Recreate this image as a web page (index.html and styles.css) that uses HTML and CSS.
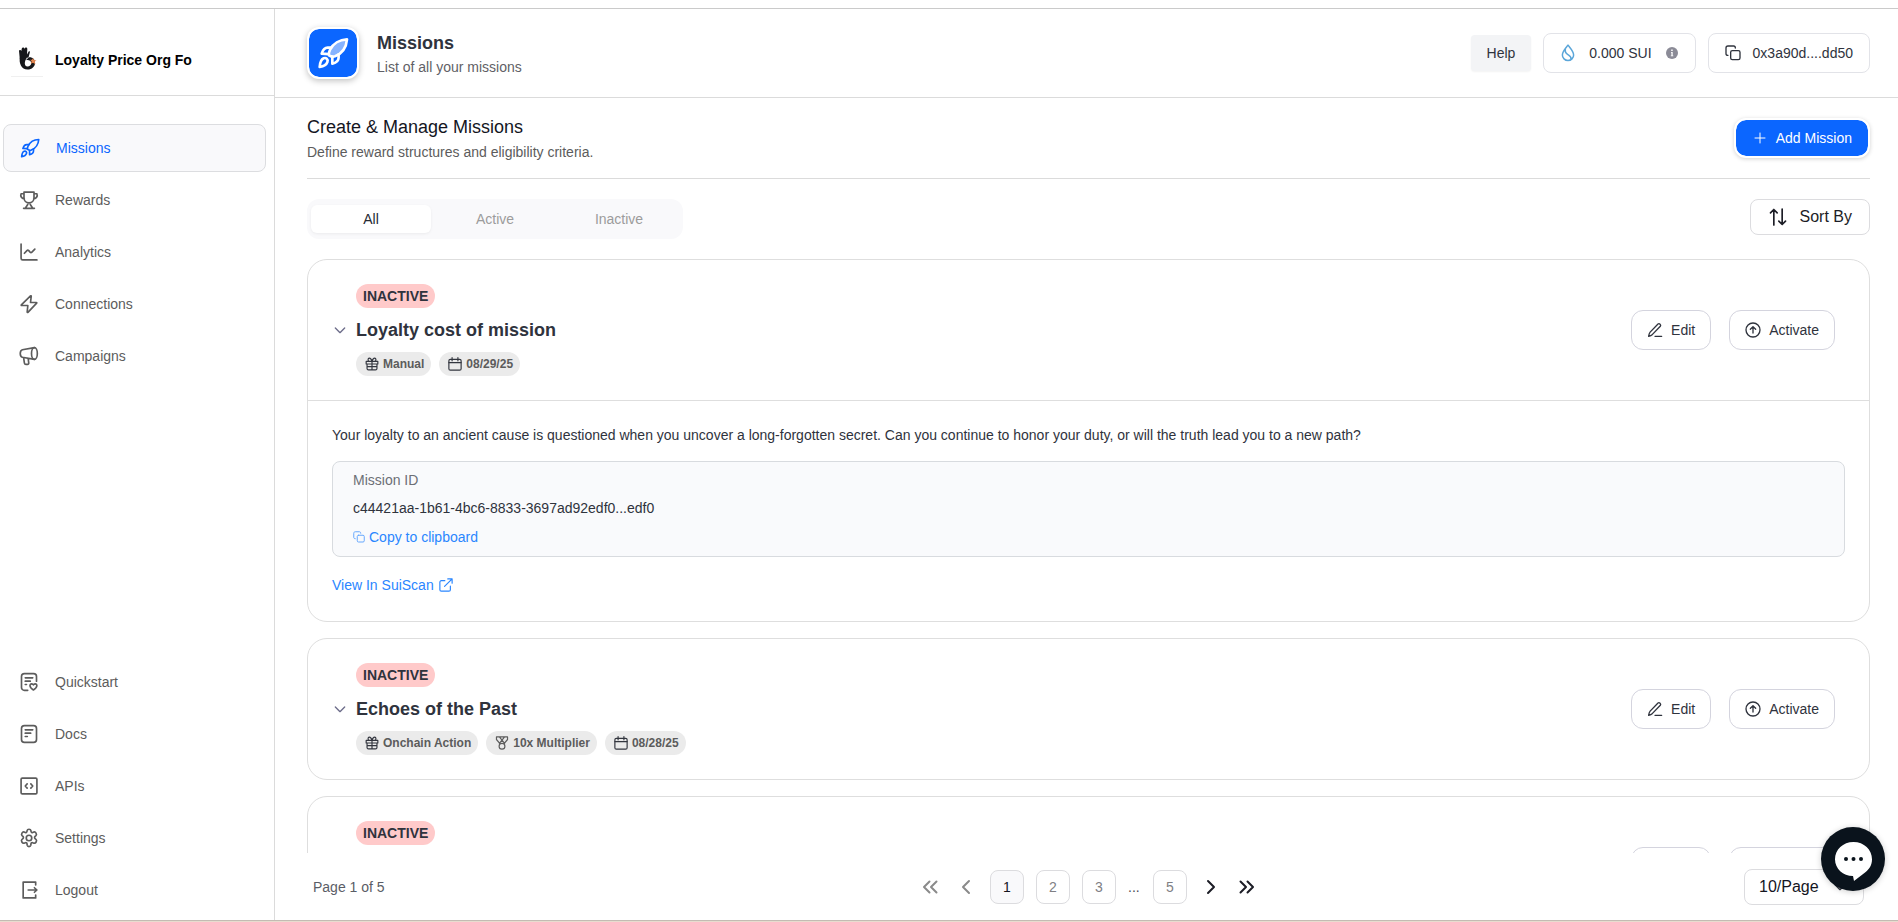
FILE: index.html
```html
<!DOCTYPE html>
<html lang="en">
<head>
<meta charset="utf-8">
<meta name="viewport" content="width=device-width, initial-scale=1">
<title>Missions</title>
<link rel="stylesheet" href="styles.css">
</head>
<body>
<svg class="sprite" aria-hidden="true">
  <symbol id="rocket" viewBox="0 0 24 24"><path class="hull" d="M22.500 1.800C17 2 12 5 9.800 9.500c-.8 1.500-1 2.700-.8 4.200 1.600 1 3 1.200 4.500.8 5-2 8.500-6.500 9-12.700z"/><path d="M10.500 8H8c-2 0-3.500 1.500-4.500 4.500l5.300.3M11.500 15v5c3-.8 4.700-2 4.700-4.500V13M2 22.500c.2-3 .8-5.500 3-6.500 1.800-.8 3.500.8 2.800 2.700C7 21 4.800 22 2 22.500z"/></symbol>
  <symbol id="trophy" viewBox="0 0 24 24"><path d="M6 2.500h12v6.800c0 3.400-2.600 6.200-6 6.200s-6-2.800-6-6.200zM6 4.500H2.500c-1 2.600.3 5.600 3.900 6.300M18 4.500h3.500c1 2.600-.3 5.600-3.900 6.300M10.500 15.500v2L7.500 22M13.500 15.500v2l3 4.500M5.500 22h13"/></symbol>
  <symbol id="chart" viewBox="0 0 24 24"><path d="M2.500 2.500v17c0 1.100.7 2 1.800 2h17.200M6.500 13.500l3-3.200c.7-.7 1.500-.7 2.200 0l1.600 1.800c.7.7 1.500.7 2.200 0L19 8.500"/></symbol>
  <symbol id="bolt" viewBox="0 0 24 24"><path d="M13.800 2.300 2.800 13c-.3.400-.1.800.4.800h7.400L9.800 21.700c0 .6.500.7.900.3l10.500-11c.4-.4.100-.8-.4-.8h-7l.9-7.500c0-.6-.5-.8-.9-.4z"/></symbol>
  <symbol id="horn" viewBox="0 0 24 24"><ellipse cx="18.500" cy="9" rx="3.500" ry="7"/><path d="M18.500 2 4 4.500C2.600 5 1.500 6.800 1.500 9s1.100 4 2.500 4.500L18.500 16M5.500 14l1 6.500c.2 1 .9 1.500 1.800 1.500h2c.9 0 1.500-.6 1.400-1.500L11 15"/></symbol>
  <symbol id="quick" viewBox="0 0 24 24"><path d="M10.500 22H6.500a3.500 3.500 0 0 1-3.500-3.500v-13A3.500 3.500 0 0 1 6.500 2h11A3.500 3.500 0 0 1 21 5.500V11M7.500 7h9M7.500 11h6M7.500 15h1.500M17.300 21.500c-5.800-3.200-4.500-7.500-2-7.300 1 .1 1.600.6 2 1.200.4-.6 1-1.100 2-1.200 2.500-.2 3.800 4.100-2 7.300z"/></symbol>
  <symbol id="doc" viewBox="0 0 24 24"><rect x="3" y="2" width="18" height="20" rx="3.500"/><path d="M7.500 7h9M7.500 11h6.500M7.500 15H10"/></symbol>
  <symbol id="api" viewBox="0 0 24 24"><rect x="2.500" y="2.500" width="19" height="19" rx="1.500"/><path d="m9.800 9.500-2.300 2.500 2.300 2.500M14.200 9.500l2.300 2.500-2.300 2.500"/></symbol>
  <symbol id="gear" viewBox="0 0 24 24"><circle cx="12" cy="12" r="3.300"/><path d="M9.700 3.200c.4-2.300 4.200-2.300 4.600 0l.2 1.100c.2.900 1.200 1.400 2 1.100l1.300-.5c2-.8 4.200 2.600 2.500 4.200l-1 .9c-.8.700-.8 2 0 2.700l1.200 1.100c1.500 1.500-.5 5-2.600 4.400l-1.500-.5c-.9-.3-1.800.2-2 1.100l-.2 1.800c-.4 2.300-4 2.300-4.400 0l-.2-1.800c-.2-.9-1.100-1.400-2-1.100l-1.500.5c-2.100.6-4.100-2.900-2.600-4.400l1.200-1.100c.8-.7.800-2 0-2.700l-1-.9C2 7.500 4.200 4.100 6.200 4.900l1.300.5c.8.300 1.800-.2 2-1.100z"/></symbol>
  <symbol id="exit" viewBox="0 0 24 24"><path d="M20 6V2.500H5v19h15V18M11 12h10.500M18.500 9.300l3 2.700-3 2.700"/></symbol>
  <symbol id="copy" viewBox="0 0 24 24"><rect x="8.500" y="8.500" width="14" height="13.500" rx="2.500"/><path d="M4.500 15.500c-1.700 0-3-1-3-2.500V4.500c0-1.700 1.300-3 3-3H13c1.500 0 2.500 1.300 2.500 3"/></symbol>
  <symbol id="drop" viewBox="0 0 24 24"><path d="M12 1.500c3.200 4.100 7.500 8.700 7.500 13a7.500 7.500 0 0 1-15 0c0-4.300 4.300-8.900 7.500-13zM8.500 7.500c-1 4.500 1.500 5.500 4 7s4 3.500 3.500 6"/></symbol>
  <symbol id="plus" viewBox="0 0 24 24"><path d="M12 2v20M2 12h20"/></symbol>
  <symbol id="sort" viewBox="0 0 24 24"><path d="M7 21.500V3M3 7l4-4 4 4M17 2.500V21M13 17l4 4 4-4"/></symbol>
  <symbol id="down" viewBox="0 0 24 24"><path d="m5 9 7 7 7-7"/></symbol>
  <symbol id="gift" viewBox="0 0 24 24"><path d="M2 7.500h20v4.500H2zM3.500 12v7.500a2.500 2.500 0 0 0 2.500 2.500h12a2.500 2.500 0 0 0 2.500-2.500V12M12 7.500V22M3.500 16.500h17M12 7.500H7.500C4.500 7.500 4.500 2 7.500 2 10.500 2 12 7.500 12 7.500zM12 7.500h4.500c3 0 3-5.500 0-5.500C13.500 2 12 7.500 12 7.500z"/></symbol>
  <symbol id="calendar" viewBox="0 0 24 24"><rect x="1.500" y="4" width="21" height="18.500" rx="2.500"/><path d="M1.500 9.500h21M7 1v5.500M17 1v5.500"/></symbol>
  <symbol id="medal" viewBox="0 0 24 24"><circle cx="12" cy="17.500" r="5"/><path d="M8.500 13 2.500 6V1.500h5l9 11M15.500 13l6-7V1.500h-5l-9 11M7.500 1.500h9"/></symbol>
  <symbol id="pen" viewBox="0 0 24 24"><path d="M2.500 21.500c.3-2.800.7-4.600 2.200-6.300L16.500 3c1.900-1.600 5.200 1.200 3.500 3.500L8.200 18.600c-1.700 1.600-3.300 2.300-5.700 2.900zM12 21.500h10"/></symbol>
  <symbol id="up" viewBox="0 0 24 24"><circle cx="12" cy="12" r="10.500"/><path d="M12 16.500V7.500M8 11l4-4 4 4"/></symbol>
  <symbol id="external" viewBox="0 0 24 24"><path d="M10 4.500H4A2.500 2.500 0 0 0 1.500 7v13A2.500 2.500 0 0 0 4 22.500h13a2.500 2.500 0 0 0 2.500-2.500v-6M15 1.500h7.500V9M22.500 1.500 9.500 14.500"/></symbol>
  <symbol id="left" viewBox="0 0 16 16"><path d="m11 2-6 6 6 6"/></symbol>
  <symbol id="right" viewBox="0 0 16 16"><path d="m5 2 6 6-6 6"/></symbol>
  <symbol id="first" viewBox="0 0 16 16"><path d="M7.500 2.500 2 8l5.500 5.500M14.500 2.500 9 8l5.500 5.500"/></symbol>
  <symbol id="last" viewBox="0 0 16 16"><path d="M1.500 2.500 7 8l-5.500 5.500M8.500 2.500 14 8l-5.500 5.500"/></symbol>
</svg>
<div class="app">
  <aside class="sidebar">
    <div class="brand">
      <span class="brand-logo"><svg viewBox="0 0 32 32" aria-hidden="true"><path d="M8.800 15 8 7c0-1.500 2-1.500 2.300 0l.5-2.500c.4-1.500 2.400-1.300 2.500.2l.7-.8c1-1 2.500-.2 2.300 1.200L16 10.500l2-3.500 1 .8-1.500 5.700z" fill="#16171a"/><path d="M9 13c-1.500 6 1.500 12.500 7.500 12.500 4.500 0 7.500-3 7.500-6.800 0-3.500-2.800-5.800-6-5.400l-3.200 3c2.300-.8 5.400.3 5.400 2.700a3.500 3.500 0 0 1-3.700 3.500c-3.200 0-3.700-4.500-.5-9z" fill="#16171a"/><path d="m22 14 1 2.300h2.500l-1.800 1.500.8 2.500-2.500-1.500-2.200 1 .8-2.500-1.600-1.500h2z" fill="#e8874f"/></svg></span>
      <strong>Loyalty Price Org Fo</strong>
    </div>
    <nav class="nav">
      <a class="nav-link current" href="#" aria-current="page"><svg class="i20"><use href="#rocket"/></svg>Missions</a>
      <a class="nav-link" href="#"><svg class="i20"><use href="#trophy"/></svg>Rewards</a>
      <a class="nav-link" href="#"><svg class="i20"><use href="#chart"/></svg>Analytics</a>
      <a class="nav-link" href="#"><svg class="i20"><use href="#bolt"/></svg>Connections</a>
      <a class="nav-link" href="#"><svg class="i20"><use href="#horn"/></svg>Campaigns</a>
    </nav>
    <nav class="nav nav-bottom">
      <a class="nav-link" href="#"><svg class="i20"><use href="#quick"/></svg>Quickstart</a>
      <a class="nav-link" href="#"><svg class="i20"><use href="#doc"/></svg>Docs</a>
      <a class="nav-link" href="#"><svg class="i20"><use href="#api"/></svg>APIs</a>
      <a class="nav-link" href="#"><svg class="i20"><use href="#gear"/></svg>Settings</a>
      <a class="nav-link" href="#"><svg class="i20"><use href="#exit"/></svg>Logout</a>
    </nav>
  </aside>
  <main class="main">
    <header class="topbar">
      <span class="tile"><svg class="tile-icon"><use href="#rocket"/></svg></span>
      <div class="topbar-text">
        <h1>Missions</h1>
        <p>List of all your missions</p>
      </div>
      <div class="topbar-actions">
        <button class="help" type="button">Help</button>
        <div class="pill balance"><svg class="i18 sui"><use href="#drop"/></svg><span>0.000 SUI</span><svg class="info" viewBox="0 0 12 12"><circle cx="6" cy="6" r="6"/><path d="M5 5h1.700v3.500h.6v.8H4.800v-.8h.6V5.800H5zM5.200 2.600h1.500v1.400H5.200z"/></svg></div>
        <button class="pill wallet" type="button"><svg class="i16"><use href="#copy"/></svg>0x3a90d....dd50</button>
      </div>
    </header>
    <section class="content">
      <div class="intro">
        <div>
          <h2>Create &amp; Manage Missions</h2>
          <p>Define reward structures and eligibility criteria.</p>
        </div>
        <button class="add" type="button"><svg class="i12"><use href="#plus"/></svg>Add Mission</button>
      </div>
      <div class="filters">
        <div class="tabs" role="tablist">
          <button class="tab selected" type="button" role="tab" aria-selected="true">All</button>
          <button class="tab" type="button" role="tab" aria-selected="false">Active</button>
          <button class="tab" type="button" role="tab" aria-selected="false">Inactive</button>
        </div>
        <button class="sort" type="button"><svg class="i20"><use href="#sort"/></svg>Sort By</button>
      </div>
      <div class="list">
        <article class="card">
          <div class="card-head">
            <button class="toggle" type="button" aria-label="Collapse"><svg class="i16"><use href="#down"/></svg></button>
            <div class="summary">
              <span class="status">INACTIVE</span>
              <h3>Loyalty cost of mission</h3>
              <div class="chips">
                <span class="chip"><svg class="i14"><use href="#gift"/></svg>Manual</span>
                <span class="chip"><svg class="i14"><use href="#calendar"/></svg>08/29/25</span>
              </div>
            </div>
            <div class="card-actions">
              <button class="action" type="button"><svg class="i16"><use href="#pen"/></svg>Edit</button>
              <button class="action" type="button"><svg class="i16"><use href="#up"/></svg>Activate</button>
            </div>
          </div>
          <div class="card-body">
            <p>Your loyalty to an ancient cause is questioned when you uncover a long-forgotten secret. Can you continue to honor your duty, or will the truth lead you to a new path?</p>
            <div class="mission-id">
              <span class="label">Mission ID</span>
              <span>c44421aa-1b61-4bc6-8833-3697ad92edf0...edf0</span>
              <button class="copy" type="button"><svg class="i12"><use href="#copy"/></svg>Copy to clipboard</button>
            </div>
            <a class="scan" href="#">View In SuiScan<svg class="i14"><use href="#external"/></svg></a>
          </div>
        </article>
        <article class="card">
          <div class="card-head">
            <button class="toggle" type="button" aria-label="Expand"><svg class="i16"><use href="#down"/></svg></button>
            <div class="summary">
              <span class="status">INACTIVE</span>
              <h3>Echoes of the Past</h3>
              <div class="chips">
                <span class="chip"><svg class="i14"><use href="#gift"/></svg>Onchain Action</span>
                <span class="chip medal"><svg class="i14"><use href="#medal"/></svg>10x Multiplier</span>
                <span class="chip"><svg class="i14"><use href="#calendar"/></svg>08/28/25</span>
              </div>
            </div>
            <div class="card-actions">
              <button class="action" type="button"><svg class="i16"><use href="#pen"/></svg>Edit</button>
              <button class="action" type="button"><svg class="i16"><use href="#up"/></svg>Activate</button>
            </div>
          </div>
        </article>
        <article class="card">
          <div class="card-head">
            <button class="toggle" type="button" aria-label="Expand"><svg class="i16"><use href="#down"/></svg></button>
            <div class="summary">
              <span class="status">INACTIVE</span>
              <h3></h3>
              <div class="chips"></div>
            </div>
            <div class="card-actions">
              <button class="action" type="button"><svg class="i16"><use href="#pen"/></svg>Edit</button>
              <button class="action" type="button"><svg class="i16"><use href="#up"/></svg>Activate</button>
            </div>
          </div>
        </article>
      </div>
      <footer class="pager">
        <span class="page-info">Page 1 of 5</span>
        <div class="pages">
          <button class="step" type="button" aria-label="First page" disabled><svg class="i16"><use href="#first"/></svg></button>
          <button class="step" type="button" aria-label="Previous page" disabled><svg class="i16"><use href="#left"/></svg></button>
          <button class="page on" type="button" aria-current="page">1</button>
          <button class="page" type="button">2</button>
          <button class="page" type="button">3</button>
          <span class="dots">...</span>
          <button class="page" type="button">5</button>
          <button class="step" type="button" aria-label="Next page"><svg class="i16"><use href="#right"/></svg></button>
          <button class="step" type="button" aria-label="Last page"><svg class="i16"><use href="#last"/></svg></button>
        </div>
        <div class="size">
          <select aria-label="Missions per page"><option>10/Page</option></select>
          <svg class="size-arrow"><use href="#down"/></svg>
        </div>
      </footer>
    </section>
  </main>
</div>
<button class="chat" type="button" aria-label="Open chat"><svg viewBox="0 0 64 64"><path d="M32.500 15C43 15 51 22.500 51 32.300c0 6-3 10.700-7.600 13.600L33 54l-1-5C22 49 14 41.800 14 32.300 14 22.500 22 15 32.500 15z" fill="#fff"/><g fill="#0a131c"><circle cx="25" cy="32" r="2"/><circle cx="32.500" cy="32" r="2"/><circle cx="40" cy="32" r="2"/></g></svg></button>
</body>
</html>
```
FILE: styles.css
```css
* { box-sizing: border-box; }

body {
  margin: 0;
  height: 100vh;
  padding: 8px 0 1px;
  display: flex;
  flex-direction: column;
  overflow: hidden;
  background: linear-gradient(#fff 50%, #e8dccf 50%);
  color: #2f333d;
  font: 14px/20px "Liberation Sans", Arial, sans-serif;
}

h1, h2, h3, p { margin: 0; }
button, select { font: inherit; color: inherit; margin: 0; }
button { background: none; border: 0; padding: 0; cursor: pointer; }
a { text-decoration: none; }

svg { flex: none; fill: none; stroke: currentColor; stroke-width: 2; stroke-linecap: round; stroke-linejoin: round; }
.sprite { position: absolute; width: 0; height: 0; }
.i12 { width: 12px; height: 12px; }
.i14 { width: 14px; height: 14px; }
.i16 { width: 16px; height: 16px; }
.i18 { width: 18px; height: 18px; }
.i20 { width: 20px; height: 20px; }

.app {
  flex: 1;
  min-height: 0;
  display: flex;
  background: #fff;
  border-top: 1px solid #cacaca;
  border-bottom: 1px solid #c4bbb3;
}

.sidebar {
  width: 275px;
  flex: none;
  display: flex;
  flex-direction: column;
  border-right: 1px solid #dbdbdb;
}
.brand {
  display: flex;
  align-items: center;
  gap: 12px;
  height: 87px;
  padding: 16px 11px 0;
  border-bottom: 1px solid #dbdbdb;
  color: #000;
}
.brand-logo { display: flex; border-bottom: 1px solid #f0f0f0; }
.brand-logo svg { width: 32px; height: 32px; stroke: none; }
.nav { display: flex; flex-direction: column; gap: 4px; padding: 28px 8px 0 3px; }
.nav-bottom { margin-top: auto; padding: 0 8px 6px 3px; }
.nav-link {
  display: flex;
  align-items: center;
  gap: 16px;
  height: 48px;
  padding: 0 16px;
  color: #5c5c5c;
}
.nav-link.current {
  background: #f9f9fb;
  border: 1px solid #dcdde0;
  border-radius: 8px;
  color: #0b66ff;
}

.main { flex: 1; min-width: 0; display: flex; flex-direction: column; }
.topbar {
  display: flex;
  align-items: center;
  height: 89px;
  padding: 0 28px 0 32px;
  border-bottom: 1px solid #dbdbdb;
}
.tile {
  display: grid;
  place-items: center;
  width: 52px;
  height: 52px;
  border: 2px solid #fff;
  border-radius: 12px;
  background: #0b66ff;
  background-clip: padding-box;
  box-shadow: 0 2px 6px #0000003d;
  color: #fff;
}
.tile-icon { --hull: #86b3ff; width: 32px; height: 32px; }
.hull { fill: var(--hull, none); }
.topbar-text { flex: 1; margin-left: 18px; padding-top: 4px; }
h1 { font-size: 18px; line-height: 24px; color: #2f333d; }
.topbar-text p { line-height: 24px; color: #5f5f66; }
.topbar-actions { display: flex; align-items: center; gap: 12px; }
.help {
  height: 36px;
  padding: 0 16px;
  border-radius: 4px;
  background: #f3f4f6;
  box-shadow: 0 1px 2px #0000000d;
}
.pill {
  display: flex;
  align-items: center;
  height: 40px;
  border: 1px solid #e2e3e8;
  border-radius: 8px;
}
.balance { gap: 12px; padding: 0 17px 0 15px; }
.wallet { gap: 12px; padding: 0 16px; }
.sui { color: #5ba6d9; }
.info { width: 12px; height: 12px; stroke: none; fill: #8b8b97; margin-left: 2px; }
.info path { fill: #fff; }

.content {
  flex: 1;
  min-height: 0;
  display: flex;
  flex-direction: column;
  padding: 0 28px 0 32px;
}
.intro {
  display: flex;
  align-items: center;
  justify-content: space-between;
  height: 81px;
  border-bottom: 1px solid #dbdbdb;
}
h2 { font-size: 18px; line-height: 28px; font-weight: 400; color: #14161f; }
.intro p { color: #5c5c5c; line-height: 22px; }
.add {
  display: flex;
  align-items: center;
  gap: 10px;
  height: 40px;
  padding: 0 16px 0 18px;
  border: 2px solid #fff;
  border-radius: 12px;
  background: #0b66ff;
  background-clip: padding-box;
  box-shadow: 0 1px 4px #0000002e;
  color: #fff;
}
.filters {
  display: flex;
  align-items: flex-start;
  justify-content: space-between;
  padding: 20px 0;
}
.tabs {
  display: flex;
  gap: 4px;
  padding: 6px 4px;
  border-radius: 12px;
  background: #f9f9fb;
}
.tab { width: 120px; height: 28px; border-radius: 6px; color: #9c9c9c; }
.tab.selected { background: #fff; color: #262a33; box-shadow: 0 1px 3px #0000000f; }
.sort {
  display: flex;
  align-items: center;
  gap: 12px;
  height: 36px;
  padding: 0 17px;
  border: 1px solid #dcdcdf;
  border-radius: 8px;
  font-size: 16px;
  color: #1c1d26;
}

.list {
  flex: 1;
  min-height: 0;
  overflow: hidden;
  display: flex;
  flex-direction: column;
  gap: 16px;
}
.card { flex: none; border: 1px solid #dedede; border-radius: 20px; }
.card-head { display: flex; align-items: center; gap: 8px; padding: 24px 34px 24px 24px; }
.toggle { display: flex; color: #6d6d8a; }
.summary {
  flex: 1;
  display: flex;
  flex-direction: column;
  align-items: flex-start;
  gap: 8px;
}
.status {
  padding: 0 7px;
  border-radius: 12px;
  background: #ffcaca;
  font-weight: 700;
  line-height: 24px;
}
h3 { font-size: 18px; line-height: 28px; min-height: 28px; }
.chips { display: flex; gap: 8px; min-height: 24px; }
.chip {
  display: flex;
  align-items: center;
  gap: 4px;
  height: 24px;
  padding: 0 7px 0 9px;
  border-radius: 12px;
  background: #ebebeb;
  color: #5c5c5c;
  font-size: 12px;
  font-weight: 700;
}
.chip svg { color: #33363f; }
.chip.medal svg { color: #5c5c5c; }
.card-actions { display: flex; gap: 18px; }
.action {
  display: flex;
  align-items: center;
  gap: 8px;
  height: 40px;
  padding: 0 15px;
  border: 1px solid #d4d4de;
  border-radius: 12px;
}
.card-body {
  display: flex;
  flex-direction: column;
  align-items: flex-start;
  padding: 24px;
  border-top: 1px solid #dedede;
}
.mission-id {
  align-self: stretch;
  display: flex;
  flex-direction: column;
  align-items: flex-start;
  gap: 8px;
  margin: 16px 0;
  padding: 8px 20px;
  border: 1px solid #d8dbdf;
  border-radius: 8px;
  background: #f9fafc;
}
.label { color: #6c6f76; }
.copy { display: flex; align-items: center; gap: 4px; line-height: 22px; color: #2a86ff; }
.copy svg { opacity: .7; }
.scan { display: flex; align-items: center; gap: 5px; line-height: 24px; color: #2a86ff; }

.pager {
  display: grid;
  grid-template-columns: 1fr auto 1fr;
  align-items: center;
  height: 67px;
  padding: 0 6px;
}
.page-info { color: #5a5d66; }
.pages { display: flex; align-items: center; gap: 12px; }
.page {
  width: 34px;
  height: 34px;
  border: 1px solid #dcdcdf;
  border-radius: 8px;
  color: #7f7f84;
}
.page.on { background: #f9f9fb; color: #14161f; }
.dots { color: #4a4d57; width: 13px; }
.step { display: grid; place-items: center; width: 24px; height: 24px; color: #1c1d26; }
.step:disabled { color: #8a8a8a; }
.size { position: relative; justify-self: end; }
.size select {
  appearance: none;
  height: 36px;
  width: 120px;
  padding: 0 14px;
  border: 1px solid #dcdcdf;
  border-radius: 8px;
  background: #fff;
  font-size: 16px;
  color: #14161f;
}
.size-arrow { position: absolute; right: 16px; top: 10px; width: 16px; height: 16px; pointer-events: none; }

.chat {
  position: absolute;
  right: 13px;
  bottom: 31px;
  width: 64px;
  height: 64px;
  border-radius: 50%;
  background: #0a131c;
  box-shadow: 0 1px 6px #00000033;
}
.chat svg { display: block; width: 64px; height: 64px; stroke: none; }
```
